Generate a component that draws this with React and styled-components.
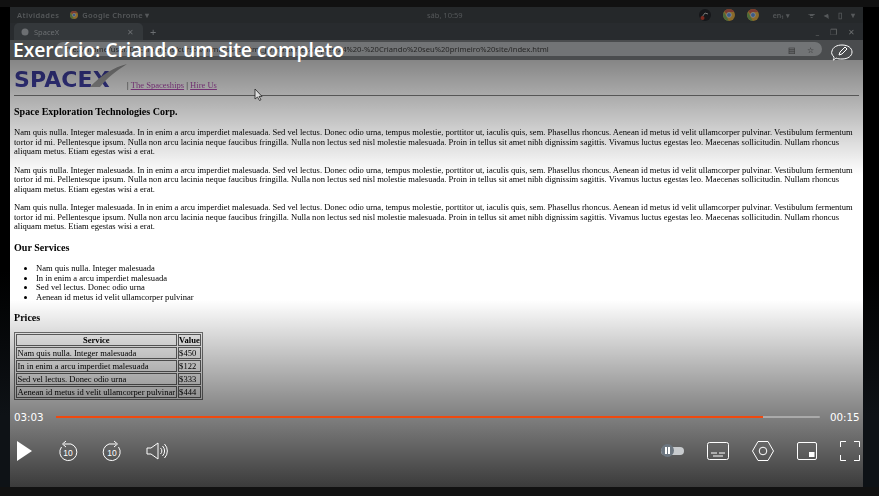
import React from 'react';
import styled, { createGlobalStyle } from 'styled-components';

const Global = createGlobalStyle`
  html, body { margin: 0; padding: 0; height: 100%; background: #111; overflow: hidden; }
`;
const Stage = styled.div`
  width: 879px; height: 496px; box-sizing: border-box; padding: 7px 16px 9px 10px;
  background: linear-gradient(#000 0, #000 55%, #0e1216 85%) 0 7px / 100% 480px no-repeat, #111;
`;
const Frame = styled.div`
  position: relative; width: 853px; height: 480px; overflow: hidden; background: #fff;
  display: flex; flex-direction: column;
`;
const Screencast = styled.div`
  display: flex; flex-direction: column; height: 100%; filter: blur(0.4px);
`;
const TopBar = styled.div`
  height: 16px; flex: none; background: #25282a; color: #55585a; display: flex; align-items: center;
  font: 600 7.5px "Noto Sans", sans-serif; padding: 0 0 0 7px; position: relative;
`;
const Activities = styled.span`letter-spacing: .4px; margin-right: 11px;`;
const AppName = styled.span`margin-left: 4px; letter-spacing: .3px;`;
const Clock = styled.span`position: absolute; left: 417px; font-weight: 400;`;
const Tray = styled.div`margin-left: auto; display: flex; align-items: center; padding-right: 8px;`;
const TrayIcons = styled.div`display: flex; align-items: center; gap: 12px; margin-right: 14px;`;
const TrayText = styled.span`font-size: 7px; margin-right: 18px;`;
const TrayGlyphs = styled.div`display: flex; align-items: center; gap: 9px;`;
const TabBar = styled.div`
  height: 17px; flex: none; background: #282b2e; display: flex; align-items: flex-end; padding-left: 4px;
  color: #6c6f72; font: 7.5px "Noto Sans", sans-serif;
`;
const Tab = styled.div`
  width: 129px; height: 17px; box-sizing: border-box; background: #34383b; border-radius: 5px 5px 0 0;
  display: flex; align-items: center; padding: 0 9px 0 7px; gap: 5px;
`;
const TabClose = styled.span`margin-left: auto; font-size: 8px;`;
const NewTab = styled.span`font-size: 11px; margin: 0 0 1px 7px; align-self: center;`;
const WindowButtons = styled.div`
  margin-left: auto; align-self: center; display: flex; gap: 11px; padding-right: 8px; font-size: 7.5px; color: #6d6f70;
`;
const AddressBar = styled.div`
  height: 20px; flex: none; background: #4a4c4e; display: flex; align-items: center; padding: 0 0 2px 46px; box-sizing: border-box;
`;
const UrlPill = styled.div`
  width: 766px; height: 14px; border-radius: 7px; background: #727476; color: #262626;
  display: flex; align-items: center; font: 7.6px "Noto Sans", sans-serif; padding: 0 8px 0 10px; box-sizing: border-box; white-space: nowrap;
`;
const UrlIcons = styled.div`margin-left: auto; display: flex; gap: 11px; align-items: center; color: #2b2b2b; font-size: 8px;`;
const Page = styled.div`
  flex: 1; background: #fff; padding: 4px 4px 0 4px; font: 8.55px/9.55px "Liberation Serif", serif; color: #000; position: relative;
`;
const Masthead = styled.div`
  display: flex; align-items: flex-end; height: 31px; border-bottom: 1px solid #808080; box-sizing: content-box; color: #222;
`;
const LogoBox = styled.div`position: relative; width: 113px; height: 26px; flex: none; margin-bottom: 4px;`;
const LogoText = styled.span`
  position: absolute; left: 0; top: 3px; font: 700 22px/24px "DejaVu Sans", sans-serif; letter-spacing: .1px; color: #4242aa;
`;
const Swoosh = styled.svg`position: absolute; left: 76px; top: -1px;`;
const NavLine = styled.div`margin-bottom: 4px; white-space: pre;`;
const VisitedLink = styled.a`color: #b24db2; text-decoration: underline;`;
const H1 = styled.h1`font: 700 10.05px/12px "Liberation Serif", serif; margin: 10px 0 10px;`;
const Para = styled.p`margin: 0 0 9px;`;
const H2 = styled.h2`font: 700 10.05px/12px "Liberation Serif", serif; margin: 10px 0 10px;`;
const PricesHeading = styled(H2)`margin: 9px 0 8px;`;
const List = styled.ul`margin: 0 0 8px; padding: 0 0 0 22px; line-height: 9.7px;`;
const PriceTable = styled.table`
  border: 1px solid #777; border-spacing: 1px; font: 8.55px/10px "Liberation Serif", serif;
  td, th { border: 1px solid #666; padding: 0 0.5px; height: 10px; }
`;
const TopShade = styled.div`
  position: absolute; left: 0; right: 0; top: 53px; height: 115px; pointer-events: none;
  background: linear-gradient(rgba(0,0,0,.48), rgba(0,0,0,0));
`;
const BottomShade = styled.div`
  position: absolute; left: 0; right: 0; bottom: 0; height: 187px; pointer-events: none;
  background: linear-gradient(rgba(0,0,0,0), rgba(0,0,0,.43) 53%, rgba(0,0,0,.77));
`;
const Title = styled.div`
  position: absolute; left: 3px; top: 31px; color: #fff; font: 600 19.4px/24px "Open Sans", sans-serif; white-space: nowrap; letter-spacing: -.1px;
`;
const NoteBadge = styled.svg`position: absolute; left: 820px; top: 33px;`;
const Cursor = styled.svg`position: absolute; left: 244px; top: 81px;`;
const Controls = styled.div`
  position: absolute; left: 4px; right: 3px; bottom: 25px; color: #fff; display: flex; flex-direction: column; gap: 16px;
`;
const TimeRow = styled.div`display: flex; align-items: center; gap: 12px;`;
const Time = styled.span`font: 10.3px/14px "DejaVu Sans", sans-serif; width: 30px; white-space: nowrap;`;
const Track = styled.div`flex: 1; height: 2px; background: #aaa; border-radius: 1px; margin-right: -2px;`;
const Progress = styled.div`height: 100%; background: #f0490f;`;
const ButtonRow = styled.div`display: flex; align-items: center; justify-content: space-between; height: 22px;`;
const Group = styled.div`display: flex; align-items: center; gap: ${p => p.$gap}px; padding-left: ${p => p.$pad || 0}px;`;
const Icon = styled.svg`display: block; flex: none; fill: none; stroke: #fff; stroke-width: 1;`;
const PlayIcon = styled(Icon)`margin-right: 2px;`;
const PauseSwitch = styled.div`
  position: relative; width: 23px; height: 8px; border-radius: 4px; background: #c8cbce;
`;
const SwitchKnob = styled.div`
  position: absolute; left: 0; top: -3px; width: 13px; height: 13px; border-radius: 50%; background: #6c7680;
  display: flex; align-items: center; justify-content: center; gap: 1.5px;
`;
const SwitchBar = styled.i`display: block; width: 2px; height: 7px; background: #fff;`;

const para = 'Nam quis nulla. Integer malesuada. In in enim a arcu imperdiet malesuada. Sed vel lectus. Donec odio urna, tempus molestie, porttitor ut, iaculis quis, sem. Phasellus rhoncus. Aenean id metus id velit ullamcorper pulvinar. Vestibulum fermentum tortor id mi. Pellentesque ipsum. Nulla non arcu lacinia neque faucibus fringilla. Nulla non lectus sed nisl molestie malesuada. Proin in tellus sit amet nibh dignissim sagittis. Vivamus luctus egestas leo. Maecenas sollicitudin. Nullam rhoncus aliquam metus. Etiam egestas wisi a erat.';

const rows = [
  ['Nam quis nulla. Integer malesuada', '$450'],
  ['In in enim a arcu imperdiet malesuada', '$122'],
  ['Sed vel lectus. Donec odio urna', '$333'],
  ['Aenean id metus id velit ullamcorper pulvinar', '$444'],
];

const ChromeDot = ({ size = 10 }) => (
  <svg width={size} height={size} viewBox="0 0 20 20">
    <circle cx="10" cy="10" r="10" fill="#8a6a2a" />
    <path d="M10 0a10 10 0 0 1 8.7 5H10a5 5 0 0 0-4.500 3L2.500 3.500A10 10 0 0 1 10 0z" fill="#7a3a30" />
    <path d="M1.500 5l4 7 4 8a10 10 0 0 1-8-15z" fill="#4a6a3a" />
    <circle cx="10" cy="10" r="4" fill="#3a5a88" stroke="#999" strokeWidth="1" />
  </svg>
);

const Replay = ({ flip }) => (
  <Icon width="20" height="22" viewBox="0 0 20 22" style={flip ? { transform: 'scaleX(-1)' } : undefined}>
    <path d="M6 4h7a8.500 8.500 0 1 1-9.500 3" />
    <path d="M8 1 4.500 4 8 7" />
    <text x="10" y="15.500" textAnchor="middle" fill="#fff" stroke="none" fontSize="8.500" fontFamily="Liberation Sans" style={flip ? { transform: 'scaleX(-1)', transformOrigin: '10px 12px' } : undefined}>10</text>
  </Icon>
);

export default function App() {
  return (
    <Stage>
      <Global />
      <Frame>
        <Screencast>
          <TopBar>
            <Activities>Atividades</Activities>
            <ChromeDot size={8} />
            <AppName>Google Chrome ▾</AppName>
            <Clock>sáb, 10:59</Clock>
            <Tray>
              <TrayIcons>
                <svg width="12" height="12" viewBox="0 0 12 12"><circle cx="6" cy="6" r="6" fill="#15171a" /><path d="M3 8l3-4 3 1" stroke="#777" fill="none" /><circle cx="3.500" cy="9" r="2" fill="#7a2a20" /></svg>
                <ChromeDot size={12} />
                <ChromeDot size={12} />
              </TrayIcons>
              <TrayText>en₁ ▾</TrayText>
              <TrayGlyphs>
                <span>ᯤ</span>
                <span>◂ᵢ</span>
                <span>▯</span>
                <span>▾</span>
              </TrayGlyphs>
            </Tray>
          </TopBar>
          <TabBar>
            <Tab>
              <svg width="8" height="8" viewBox="0 0 8 8"><circle cx="4" cy="4" r="3.500" fill="#6c6f72" /></svg>
              SpaceX
              <TabClose>✕</TabClose>
            </Tab>
            <NewTab>+</NewTab>
            <WindowButtons><span>_</span><span>❐</span><span>✕</span></WindowButtons>
          </TabBar>
          <AddressBar>
            <UrlPill>
              file:///home/user/Documentos/cursos/html-css-js/html_js/master/examples/24%20-%20Criando%20seu%20primeiro%20site/index.html
              <UrlIcons><span>▤</span><span>☆</span></UrlIcons>
            </UrlPill>
          </AddressBar>
          <Page>
            <Masthead>
              <LogoBox>
                <LogoText>SPACEX</LogoText>
                <Swoosh width="40" height="24" viewBox="0 0 40 24"><path d="M0 23C10 12 24 3 37 0 26 7 17 14 10 23z" fill="#a8a8a8" /></Swoosh>
              </LogoBox>
              <NavLine>| <VisitedLink>The Spaceships</VisitedLink> | <VisitedLink>Hire Us</VisitedLink></NavLine>
            </Masthead>
            <H1>Space Exploration Technologies Corp.</H1>
            <Para>{para}</Para>
            <Para>{para}</Para>
            <Para>{para}</Para>
            <H2>Our Services</H2>
            <List>
              <li>Nam quis nulla. Integer malesuada</li>
              <li>In in enim a arcu imperdiet malesuada</li>
              <li>Sed vel lectus. Donec odio urna</li>
              <li>Aenean id metus id velit ullamcorper pulvinar</li>
            </List>
            <PricesHeading>Prices</PricesHeading>
            <PriceTable>
              <thead><tr><th>Service</th><th>Value</th></tr></thead>
              <tbody>
                {rows.map(r => <tr key={r[1]}><td>{r[0]}</td><td>{r[1]}</td></tr>)}
              </tbody>
            </PriceTable>
          </Page>
        </Screencast>
        <TopShade />
        <BottomShade />
        <Title>Exercício: Criando um site completo</Title>
        <NoteBadge width="24" height="24" viewBox="0 0 24 24" fill="none" stroke="#fff" strokeWidth="1">
          <path d="M3 20c1-1 1-2 1-3-2-2-3-4-2-6 1-4 5-6 10-6 6 0 10 3 10 7s-4 7-10 7c-2 0-4 0-6-1-1 1-2 2-3 2z" />
          <path d="M9 15l1-3 5-5 2 2-5 5z" />
        </NoteBadge>
        <Cursor width="10" height="13" viewBox="0 0 10 13"><path d="M1 1v10l2.500-2 2 3.500 1.500-.8-2-3.300H8z" fill="#ddd" stroke="#222" strokeWidth=".8" /></Cursor>
        <Controls>
          <TimeRow>
            <Time>03:03</Time>
            <Track><Progress style={{ width: `${(706 / 763) * 100}%` }} /></Track>
            <Time>00:15</Time>
          </TimeRow>
          <ButtonRow>
            <Group $gap={24} $pad={3}>
              <PlayIcon width="15" height="20" viewBox="0 0 15 20"><path d="M0 0l15 10L0 20z" fill="#fff" stroke="none" /></PlayIcon>
              <Replay />
              <Replay flip />
              <Icon width="22" height="18" viewBox="0 0 22 18"><path d="M1 6h4l7-5v16l-7-5H1z" /><path d="M14.500 6a4 4 0 0 1 0 6M16.500 4a7 7 0 0 1 0 10M18.500 2a10 10 0 0 1 0 14" /></Icon>
            </Group>
            <Group $gap={23}>
              <PauseSwitch><SwitchKnob><SwitchBar /><SwitchBar /></SwitchKnob></PauseSwitch>
              <Icon width="22" height="18" viewBox="0 0 22 18"><rect x=".5" y=".5" width="21" height="17" rx="2" /><path d="M4 11h6M12 11h6M6 14h10" /></Icon>
              <Icon width="22" height="20" viewBox="0 0 22 20"><path d="M6 .5h10L21.500 10 16 19.500H6L.5 10z" /><circle cx="11" cy="10" r="3.800" /></Icon>
              <Icon width="20" height="18" viewBox="0 0 20 18"><rect x=".5" y=".5" width="19" height="17" rx="1.500" /><rect x="12" y="10" width="5.500" height="5" fill="#fff" stroke="none" /></Icon>
              <Icon width="20" height="20" viewBox="0 0 20 20"><path d="M.5 6V.5H6M14 .5h5.500V6M19.500 14v5.500H14M6 19.500H.5V14" /></Icon>
            </Group>
          </ButtonRow>
        </Controls>
      </Frame>
    </Stage>
  );
}
